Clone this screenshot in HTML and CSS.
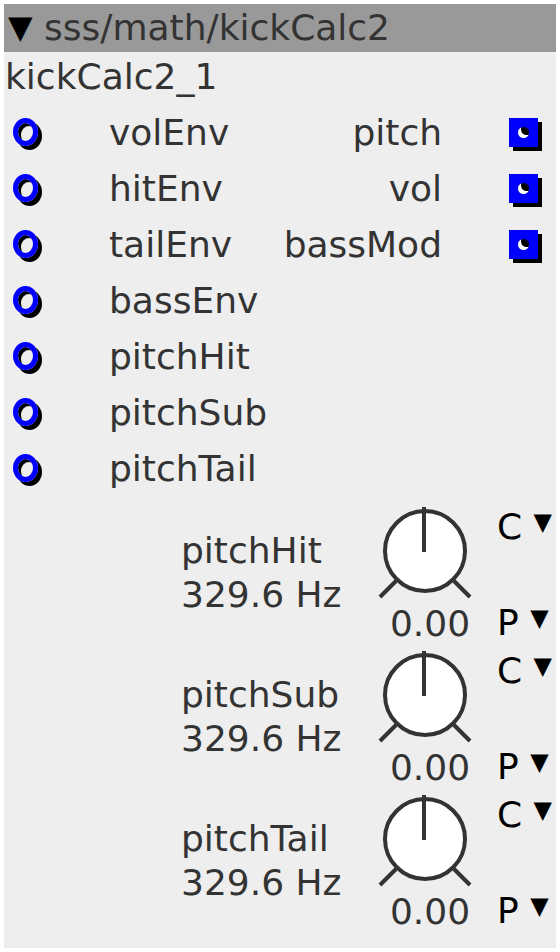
FILE: index.html
```html
<!DOCTYPE html>
<html lang="en">
<head>
  <meta charset="UTF-8">
  <title>kickCalc2</title>
  <link rel="stylesheet" href="styles.css">
</head>
<body>
  <div class="node">
    <div class="head"><span class="tri">&#9660;</span> sss/math/kickCalc2</div>
    <div class="name">kickCalc2_1</div>

    <div class="ports">
      <div class="inlets">
        <div class="port"><span class="inlet"></span><span>volEnv</span></div>
        <div class="port"><span class="inlet"></span><span>hitEnv</span></div>
        <div class="port"><span class="inlet"></span><span>tailEnv</span></div>
        <div class="port"><span class="inlet"></span><span>bassEnv</span></div>
        <div class="port"><span class="inlet"></span><span>pitchHit</span></div>
        <div class="port"><span class="inlet"></span><span>pitchSub</span></div>
        <div class="port"><span class="inlet"></span><span>pitchTail</span></div>
      </div>
      <div class="outlets">
        <div class="port"><span class="olabel">pitch</span><span class="outlet"></span></div>
        <div class="port"><span class="olabel">vol</span><span class="outlet"></span></div>
        <div class="port"><span class="olabel">bassMod</span><span class="outlet"></span></div>
      </div>
    </div>

    <div class="param">
      <div class="plabel">pitchHit<br>329.6 Hz</div>
      <div class="knob">
        <svg width="96" height="96" viewBox="0 0 96 96">
          <circle cx="47" cy="47" r="40" fill="#fff" stroke="#333" stroke-width="4"/>
          <line x1="46" y1="3" x2="46" y2="48" stroke="#333" stroke-width="4"/>
          <line x1="2" y1="93" x2="18" y2="77" stroke="#333" stroke-width="4"/>
          <line x1="76" y1="77" x2="92" y2="93" stroke="#333" stroke-width="4"/>
        </svg>
        <div class="val">0.00</div>
      </div>
      <div class="drops">
        <div class="drop">C <span class="arr">&#9660;</span></div>
        <div class="drop">P <span class="arr">&#9660;</span></div>
      </div>
    </div>

    <div class="param">
      <div class="plabel">pitchSub<br>329.6 Hz</div>
      <div class="knob">
        <svg width="96" height="96" viewBox="0 0 96 96">
          <circle cx="47" cy="47" r="40" fill="#fff" stroke="#333" stroke-width="4"/>
          <line x1="46" y1="3" x2="46" y2="48" stroke="#333" stroke-width="4"/>
          <line x1="2" y1="93" x2="18" y2="77" stroke="#333" stroke-width="4"/>
          <line x1="76" y1="77" x2="92" y2="93" stroke="#333" stroke-width="4"/>
        </svg>
        <div class="val">0.00</div>
      </div>
      <div class="drops">
        <div class="drop">C <span class="arr">&#9660;</span></div>
        <div class="drop">P <span class="arr">&#9660;</span></div>
      </div>
    </div>

    <div class="param">
      <div class="plabel">pitchTail<br>329.6 Hz</div>
      <div class="knob">
        <svg width="96" height="96" viewBox="0 0 96 96">
          <circle cx="47" cy="47" r="40" fill="#fff" stroke="#333" stroke-width="4"/>
          <line x1="46" y1="3" x2="46" y2="48" stroke="#333" stroke-width="4"/>
          <line x1="2" y1="93" x2="18" y2="77" stroke="#333" stroke-width="4"/>
          <line x1="76" y1="77" x2="92" y2="93" stroke="#333" stroke-width="4"/>
        </svg>
        <div class="val">0.00</div>
      </div>
      <div class="drops">
        <div class="drop">C <span class="arr">&#9660;</span></div>
        <div class="drop">P <span class="arr">&#9660;</span></div>
      </div>
    </div>
  </div>
</body>
</html>
```

FILE: styles.css
```css
body {
  margin: 4px;
  background: #fff;
  font-family: "DejaVu Sans", sans-serif;
  color: #333;
}
.node {
  width: 552px;
  height: 944px;
  background: #eee;
  font-size: 36px;
}
.head {
  height: 48px;
  line-height: 46px;
  background: #999;
  padding-left: 4px;
  white-space: nowrap;
}
.tri {
  font-size: 32px;
  color: #000;
  vertical-align: 2px;
}
.name {
  height: 52px;
  line-height: 50px;
  padding-left: 1px;
}
.ports {
  display: flex;
}
.inlets {
  width: 260px;
}
.port {
  height: 56px;
  display: flex;
  align-items: center;
}
.inlet {
  width: 15px;
  height: 18px;
  border: 5px solid #00f;
  border-radius: 50%;
  box-shadow: 4px 4px 0 #000, inset 3px 3px 0 #000;
  margin: 0 71px 0 9px;
  flex: none;
}
.outlets {
  flex: 1;
}
.olabel {
  width: 178px;
  text-align: right;
}
.outlet {
  width: 29px;
  height: 29px;
  background: #00f;
  box-shadow: 4px 4px 0 #000;
  margin-left: 67px;
  display: flex;
  align-items: center;
  justify-content: center;
}
.outlet::after {
  content: "";
  width: 11px;
  height: 11px;
  border-radius: 50%;
  background: #000;
  box-shadow: inset 3px -3px 0 #fff;
}
.param {
  height: 144px;
  display: flex;
}
.plabel {
  width: 197px;
  padding-left: 177px;
  padding-top: 33px;
  line-height: 44px;
  white-space: nowrap;
}
.knob {
  width: 104px;
  padding-top: 8px;
}
.knob svg {
  display: block;
}
.val {
  line-height: 36px;
  text-align: center;
  margin-top: 6px;
}
.drops {
  padding-left: 15px;
  padding-top: 8px;
  color: #000;
}
.drop {
  height: 96px;
  line-height: 36px;
}
.arr {
  font-size: 24px;
  vertical-align: 9px;
}
```
